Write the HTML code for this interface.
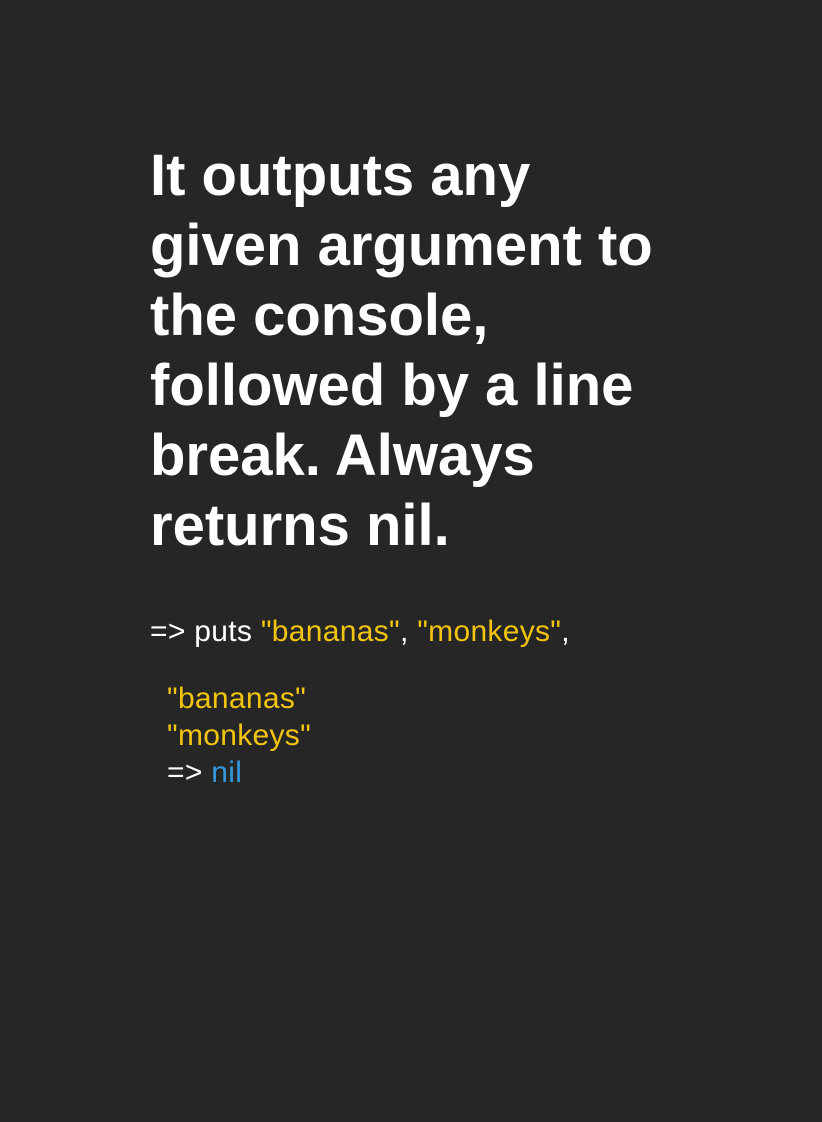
<!DOCTYPE html>
<html><head><meta charset="utf-8"><style>
html,body{margin:0;padding:0;background:#262626;width:822px;height:1122px;overflow:hidden}
body{font-family:"Liberation Sans",sans-serif;color:#fff}
h1{position:absolute;left:150px;top:141px;margin:0;font-size:58px;line-height:70px;font-weight:bold;width:560px}
.c{position:absolute;left:150px;font-size:30px;line-height:37px;white-space:pre;letter-spacing:0.3px}
.y{color:#f1c40f}.b{color:#3498db}
</style></head><body>
<h1>It outputs any<br>given argument to<br>the console,<br>followed by a line<br>break. Always<br>returns nil.</h1>
<div class="c" style="top:613px">=&gt; puts <span class="y">"bananas"</span>, <span class="y">"monkeys"</span>,</div>
<div class="c" style="top:680px;left:167px"><span class="y">"bananas"</span>
<span class="y">"monkeys"</span>
=&gt; <span class="b">nil</span></div>
</body></html>
